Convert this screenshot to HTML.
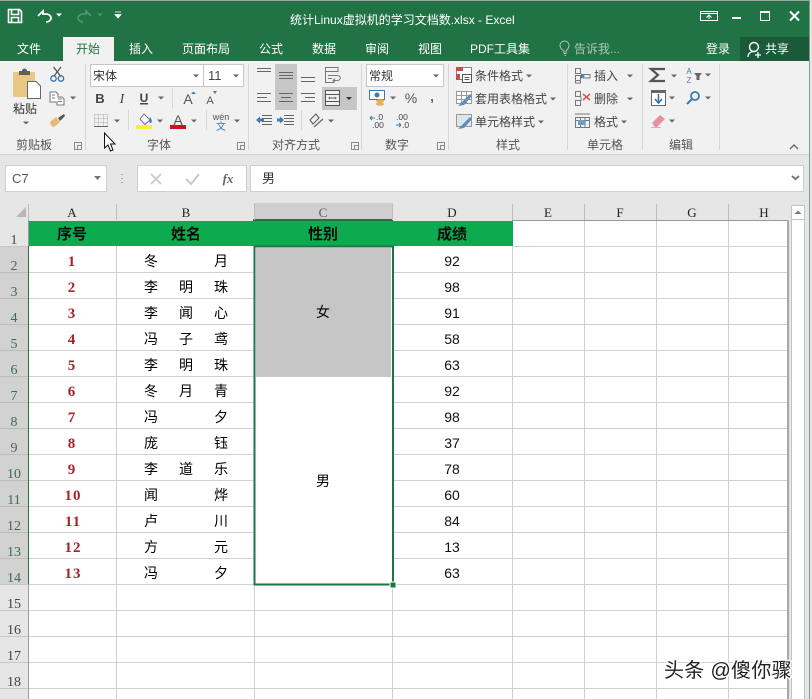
<!DOCTYPE html>
<html lang="zh"><head><meta charset="utf-8"><title>统计Linux虚拟机的学习文档数.xlsx - Excel</title>
<style>
html,body{margin:0;padding:0;background:#e6e6e6;width:812px;height:699px;overflow:hidden}
svg{display:block}
text{font-family:"Liberation Sans","Noto Sans CJK SC",sans-serif;font-size:12px;fill:#444}
.tab{fill:#fff;text-anchor:middle}
.lb{fill:#555;text-anchor:middle}
.c{font-family:"Liberation Serif","WenQuanYi Zen Hei","Noto Sans CJK SC",sans-serif;font-size:14px;fill:#000;text-anchor:middle;transform:translateY(1px)}
.h{font-family:"Liberation Serif","WenQuanYi Zen Hei","Noto Sans CJK SC",sans-serif;font-size:15px;font-weight:700;fill:#0a0a0a;text-anchor:middle}
.n{font-family:"Liberation Serif",serif;font-size:15px;font-weight:700;fill:#a5232b;text-anchor:middle;letter-spacing:1px}
.d{font-size:14px;fill:#111;text-anchor:middle;transform:translateY(1px)}
.r{font-family:"Liberation Serif",serif;font-size:14px;fill:#444;text-anchor:middle}
.rs{fill:#3f6a54}
.ch{font-family:"Liberation Serif",serif;font-size:13px;fill:#222;text-anchor:middle}
</style></head><body>
<svg width="812" height="699" viewBox="0 0 812 699" xmlns="http://www.w3.org/2000/svg">
<defs>
<path id="dd" d="M-3 -1.500H3L0 1.500Z" fill="#666"/>
<path id="dl" d="M0.500 0.500H7.500V7.500H0.500ZM3.500 3.500H7.500V7.500H3.500Z" fill="none" stroke="#8a8a8a"/>
</defs>
<rect width="812" height="699" fill="#e6e6e6"/>
<!-- title bar -->
<rect x="0" y="1" width="809" height="60" fill="#217346"/>
<rect x="809" y="0" width="1" height="699" fill="#7f9f8d"/>
<rect x="0" y="0" width="809" height="1" fill="#9aa8a0"/>
<path d="M8.500 9.500H19.500L21.500 11.500V22.500H8.500ZM11.500 9.500V14.500H18.500V9.500M11.500 22.500V17.500H18.500V22.500" fill="none" stroke="#fff" stroke-width="1.600"/>
<path d="M38 16L43 11V14H46C49 14 51 16 51 18C51 20 49 22 46 22" fill="none" stroke="#fff" stroke-width="1.800"/>
<path d="M56 13.500H62L59 16.500Z" fill="#fff"/>
<path d="M91 16L86 11V14H83C80 14 78 16 78 18C78 20 80 22 83 22" fill="none" stroke="#4f9470" stroke-width="1.800"/>
<path d="M97 13.500H103L100 16.500Z" fill="#4f9470"/>
<path d="M115 12H121M115 14.500H121L118 18Z" fill="#fff" stroke="#fff" stroke-width=".8"/>
<text x="290" y="24" style="fill:#fff">统计Linux虚拟机的学习文档数.xlsx - Excel</text>
<path d="M700.500 11.500H717.500V20.500H700.500ZM700.500 13.500H717.500M709 19V15M706.500 17.500L709 15L711.500 17.500" fill="none" stroke="#fff" stroke-width="1"/>
<rect x="732" y="17" width="9" height="2" fill="#fff"/>
<rect x="760.500" y="11.500" width="9" height="9" fill="none" stroke="#fff" stroke-width="1"/><rect x="760" y="11" width="10" height="2" fill="#fff"/>
<path d="M790 11.500L799 20.500M799 11.500L790 20.500" stroke="#fff" stroke-width="2"/>
<!-- tabs -->
<rect x="63" y="37" width="51" height="24" fill="#f1f1f1"/>
<rect x="740" y="37" width="69" height="24" fill="#1b5a38"/>
<text class="tab" x="29" y="53">文件</text>
<text class="tab" x="88" y="53" style="fill:#217346">开始</text>
<text class="tab" x="141" y="53">插入</text>
<text class="tab" x="206" y="53">页面布局</text>
<text class="tab" x="271" y="53">公式</text>
<text class="tab" x="324" y="53">数据</text>
<text class="tab" x="377" y="53">审阅</text>
<text class="tab" x="430" y="53">视图</text>
<text class="tab" x="500" y="53">PDF工具集</text>
<path d="M564 53.500V51C561 49 560 47 560 45.500A4.500 4.500 0 0 1 569 45.500C569 47 568 49 566 51V53.500ZM564.500 55.500H566" fill="none" stroke="#a9c9b6" stroke-width="1"/>
<text class="tab" x="597" y="53" style="fill:#a9c9b6">告诉我...</text>
<text class="tab" x="718" y="53">登录</text>
<circle cx="754" cy="47" r="4.500" fill="none" stroke="#fff" stroke-width="1.400"/>
<path d="M748 57C748 53 751 51.500 754 51.500M755 55H761M758 52V58" fill="none" stroke="#fff" stroke-width="1.300"/>
<text class="tab" x="777" y="53">共享</text>
<!-- ribbon -->
<rect x="0" y="61" width="809" height="93" fill="#f1f1f1"/>
<rect x="0" y="154" width="809" height="1" fill="#d4d4d4"/>
<path d="M85.500 64V150M248.500 64V150M361.500 64V150M448.500 64V150M567.500 64V150M642.500 64V150M719.500 64V150M172.500 88V108M128.500 110V130M206.500 110V130M301.500 110V130" stroke="#d6d6d6"/>
<!-- clipboard -->
<rect x="13" y="72" width="22" height="25" rx="1" fill="#eac784"/>
<path d="M19 75V71H22A2.500 2.500 0 0 1 27 71H30V75Z" fill="#5f5f5f"/>
<path d="M27.500 81.500H36L40.500 86V98.500H27.500Z" fill="#fff" stroke="#666"/>
<text x="25" y="113" style="fill:#333;text-anchor:middle">粘贴</text>
<use href="#dd" x="26" y="123"/>
<circle cx="53.500" cy="78.500" r="2.700" fill="none" stroke="#2f73ad" stroke-width="1.300"/><circle cx="61" cy="78.500" r="2.700" fill="none" stroke="#2f73ad" stroke-width="1.300"/>
<path d="M54 76L61 67M60.500 76L53.500 67" stroke="#555" stroke-width="1.300"/>
<path d="M50 92H56L58 94V97H62L64 99V105H57V102H50Z" fill="#fff" stroke="#777"/>
<path d="M58 99H62M58 101.500H62M52 95H55M52 98H55" stroke="#777"/>
<use href="#dd" x="73" y="98"/>
<path d="M50 122L56 117L60 122L54 127C52 127 50 124 50 122Z" fill="#e3bc76"/>
<path d="M58 118L64 114L65 116L60 121Z" fill="#555"/>
<text class="lb" x="34" y="149">剪贴板</text>
<use href="#dl" x="74" y="142"/>
<!-- font -->
<rect x="90.500" y="64.500" width="113" height="22" fill="#fff" stroke="#c6c6c6"/>
<rect x="203.500" y="64.500" width="40" height="22" fill="#fff" stroke="#c6c6c6"/>
<text x="93" y="80" style="fill:#333">宋体</text>
<use href="#dd" x="196" y="76"/>
<text x="208" y="80" style="fill:#444;font-size:13px">11</text>
<use href="#dd" x="236" y="76"/>
<text x="100" y="103" style="font-weight:700;font-size:13px;fill:#444;text-anchor:middle">B</text>
<text x="122" y="103" style="font-family:'Liberation Serif',serif;font-style:italic;font-size:14px;fill:#444;text-anchor:middle">I</text>
<text x="144" y="102" style="font-weight:700;font-size:12px;fill:#444;text-anchor:middle">U</text><rect x="140" y="103" width="8" height="1.500" fill="#444"/>
<use href="#dd" x="161" y="98"/>
<text x="188" y="104" style="font-size:14px;fill:#555;text-anchor:middle">A</text><path d="M191 94H196L193.500 91.500Z" fill="#3f79ad"/>
<text x="210" y="104" style="font-size:11px;fill:#555;text-anchor:middle">A</text><path d="M213 91H217L215 94Z" fill="#3f79ad"/>
<path d="M94.500 114.500H107.500V127M94.500 114.500V127M94.500 118.500H107.500M94.500 122.500H107.500M98.500 114.500V127M103.500 114.500V127" fill="none" stroke="#aaa" stroke-dasharray="1 1"/>
<rect x="94" y="126" width="14" height="1" fill="#666"/>
<use href="#dd" x="117" y="121"/>
<path d="M140 119L144 114L150 120L145 124.500Z" fill="#fff" stroke="#777"/><path d="M150 117C152.500 120 152 123 150.500 123C149 123 149 120 150 117Z" fill="#3f79ad"/>
<rect x="136" y="125" width="16" height="4" fill="#f7f03a"/>
<use href="#dd" x="160" y="121"/>
<text x="178" y="125" style="font-size:14px;fill:#555;text-anchor:middle">A</text>
<rect x="170" y="125" width="16" height="4" fill="#c8161d"/>
<use href="#dd" x="194" y="121"/>
<text x="221" y="120" style="font-size:9px;fill:#555;text-anchor:middle">wén</text>
<text x="221" y="130" style="font-size:10px;fill:#3f79ad;text-anchor:middle">文</text>
<use href="#dd" x="237" y="121"/>
<text class="lb" x="159" y="149">字体</text>
<use href="#dl" x="237" y="142"/>
<!-- alignment -->
<rect x="275" y="64" width="22" height="46" fill="#c6c6c6"/>
<rect x="322" y="87" width="35" height="23" fill="#c6c6c6"/>
<path d="M257 68.500H271M257 71.500H271M279 72.500H293M279 75.500H293M279 78.500H293M301 77.500H315M301 81.500H315" stroke="#666"/>
<path d="M325.500 67.500H338V71.500H325.500ZM325.500 71.500V82.500H334M328 75.500H337C341.500 75.500 341.500 80.500 337 80.500H333M335 78.500L333 80.500L335 82.500M328 78.500H332" fill="none" stroke="#777"/>
<path d="M257 93.500H271M257 97.500H267M257 101.500H271M279 93.500H293M281 97.500H291M279 101.500H293M301 93.500H315M305 97.500H315M301 101.500H315" stroke="#666"/>
<path d="M325.500 90.500H339.500V105.500H325.500ZM325.500 94.500H339.500M325.500 101.500H339.500M329.500 98H336" fill="#f1f1f1" stroke="#555"/>
<path d="M328 98L330 96.500V99.500ZM337 98L335 96.500V99.500Z" fill="#3f79ad"/>
<path d="M346 97H352L349 100Z" fill="#333"/>
<path d="M262 115.500H272M262 118.500H272M262 121.500H272M262 124.500H272" stroke="#666"/><path d="M256 120L260 116.500V118.500H264V121.500H260V123.500Z" fill="#3f79ad"/>
<path d="M284 115.500H294M284 118.500H294M284 121.500H294M284 124.500H294" stroke="#666"/><path d="M284 120L280 116.500V118.500H277V121.500H280V123.500Z" fill="#3f79ad"/>
<path d="M310 120L316 114L319 118L313 124ZM314 127L323 119" fill="none" stroke="#666" stroke-width="1.200"/>
<use href="#dd" x="331" y="121"/>
<text class="lb" x="296" y="149">对齐方式</text>
<use href="#dl" x="351" y="142"/>
<!-- number -->
<rect x="366.500" y="64.500" width="77" height="22" fill="#fff" stroke="#c6c6c6"/>
<text x="369" y="80" style="fill:#333">常规</text>
<use href="#dd" x="436" y="76"/>
<rect x="369.500" y="90.500" width="15" height="9" fill="#fff" stroke="#3f79ad"/>
<circle cx="377" cy="95" r="2.500" fill="#3f79ad"/><ellipse cx="380" cy="101" rx="4" ry="1.800" fill="#e0b35f"/><ellipse cx="380" cy="104" rx="4" ry="1.800" fill="#e0b35f"/>
<use href="#dd" x="393" y="98"/>
<text x="411" y="103" style="font-size:14px;fill:#555;text-anchor:middle">%</text>
<text x="432" y="101" style="font-weight:700;font-size:13px;fill:#555;text-anchor:middle">,</text>
<text x="376" y="120" style="font-size:8.500px;fill:#444">.0</text>
<text x="372" y="128" style="font-size:8.500px;fill:#444">.00</text>
<path d="M370 118H375M370 118L372 116M370 118L372 120" stroke="#3f79ad" fill="none"/>
<text x="396" y="120" style="font-size:8.500px;fill:#444">.00</text>
<text x="402" y="128" style="font-size:8.500px;fill:#444">.0</text>
<path d="M401 125H396M401 125L399 123M401 125L399 127" stroke="#3f79ad" fill="none"/>
<text class="lb" x="397" y="149">数字</text>
<use href="#dl" x="437" y="142"/>
<!-- styles -->
<path d="M456.500 67.500H471.500V79.500H456.500Z" fill="#fff" stroke="#888"/><rect x="456" y="67" width="7" height="4" fill="#c0504d"/><rect x="456" y="74" width="4" height="6" fill="#c0504d"/>
<rect x="462.500" y="74.500" width="9" height="8" fill="#fff" stroke="#555"/><path d="M464.500 77.500H469.500M464.500 79.500H469.500" stroke="#555"/>
<text x="475" y="80">条件格式</text><use href="#dd" x="529" y="76"/>
<path d="M456.500 91.500H471.500V103.500H456.500ZM456.500 95.500H471.500M456.500 99.500H471.500M461.500 91.500V103.500M466.500 91.500V103.500" fill="#fff" stroke="#999"/>
<path d="M461 103L470 94L472 96L464 105L458 106Z" fill="#5c8fba"/>
<text x="475" y="103">套用表格格式</text><use href="#dd" x="553" y="99"/>
<path d="M456.500 114.500H471.500V126.500H456.500Z" fill="#dfe5ea" stroke="#999"/>
<path d="M461 126L470 117L472 119L464 128L458 129Z" fill="#5c8fba"/>
<text x="475" y="126">单元格样式</text><use href="#dd" x="541" y="122"/>
<text class="lb" x="508" y="149">样式</text>
<!-- cells -->
<path d="M575.500 68.500H580.500V73.500H575.500ZM575.500 75.500H580.500V80.500H575.500ZM583 74.500H590V78H583ZM575.500 80.500V83H580.500V80.500" fill="none" stroke="#777"/>
<path d="M585 76L581 73.500V78.500Z" fill="#3f79ad"/>
<text x="594" y="80">插入</text><use href="#dd" x="630" y="76"/>
<path d="M575.500 91.500H580.500V96.500H575.500ZM575.500 100.500H580.500V105.500H575.500ZM581 96.500V100.500H575.500" fill="none" stroke="#777"/>
<path d="M583 94L590 100M590 94L583 100" stroke="#d9534f" stroke-width="1.500"/>
<text x="594" y="103">删除</text><use href="#dd" x="630" y="99"/>
<path d="M575.500 117.500H589.500V127.500H575.500ZM575.500 120.500H589.500M580.500 117.500V127.500M585 117.500V127.500M575 114H590" fill="none" stroke="#777"/>
<rect x="578" y="120" width="7" height="5" fill="#6d9cc4"/>
<text x="594" y="126">格式</text><use href="#dd" x="624" y="122"/>
<text class="lb" x="605" y="149">单元格</text>
<!-- editing -->
<path d="M665 69H651L658 75L651 81H665" fill="none" stroke="#555" stroke-width="2.200"/>
<use href="#dd" x="674" y="76"/>
<text x="689" y="74" style="font-size:8px;fill:#3f79ad;text-anchor:middle">A</text><text x="689" y="83" style="font-size:8px;fill:#8e5fae;text-anchor:middle">Z</text>
<path d="M694 73H702L699.500 76V80H696.500V76Z" fill="#666"/><use href="#dd" x="708" y="75"/>
<rect x="651.500" y="90.500" width="14" height="15" fill="#fff" stroke="#666"/><rect x="651" y="90" width="15" height="3" fill="#666"/>
<path d="M658.500 94V102M655 99L658.500 103L662 99" fill="none" stroke="#2f73ad" stroke-width="1.600"/>
<use href="#dd" x="672" y="98"/>
<circle cx="695" cy="96" r="4" fill="none" stroke="#3f79ad" stroke-width="1.800"/><path d="M692 99L687 104" stroke="#3f79ad" stroke-width="2"/>
<use href="#dd" x="708" y="98"/>
<path d="M652 123L660 115L665 119L657 127H655Z" fill="#eb8f9e"/><rect x="651" y="127" width="10" height="1" fill="#bbb"/>
<use href="#dd" x="672" y="121"/>
<text class="lb" x="681" y="149">编辑</text>
<path d="M790 149L794 145L798 149" fill="none" stroke="#666" stroke-width="1.400"/>
<!-- cursor -->
<path d="M104.500 133V148L108 145L110.500 151L113 150L110.500 144H115Z" fill="#fff" stroke="#111"/>
<!-- formula bar -->
<rect x="5.500" y="165.500" width="101" height="26" fill="#fff" stroke="#cfcfcf"/>
<text x="12" y="183" style="font-size:13px;fill:#555">C7</text>
<path d="M94 176H101L97.500 180Z" fill="#777"/>
<path d="M122 174V175M122 178V179M122 182V183" stroke="#aaa" stroke-width="2"/>
<rect x="137.500" y="165.500" width="109" height="26" fill="#fff" stroke="#cfcfcf"/>
<rect x="250.500" y="165.500" width="553" height="26" fill="#fff" stroke="#cfcfcf"/>
<path d="M151 174L161 184M161 174L151 184" stroke="#c9c9c9" stroke-width="1.800"/>
<path d="M186 179L191 184L199 174" fill="none" stroke="#c9c9c9" stroke-width="2"/>
<text x="228" y="183" style="font-family:'Liberation Serif',serif;font-style:italic;font-weight:700;font-size:13px;fill:#666;text-anchor:middle">fx</text>
<text x="262" y="183" style="font-size:13px;fill:#333">男</text>
<path d="M792 176L795.500 179L799 176" fill="none" stroke="#777" stroke-width="2"/>
<!-- sheet -->
<rect x="29" y="221" width="758" height="478" fill="#fff"/>
<rect x="254" y="203" width="139" height="17" fill="#cfcfcf"/>
<rect x="253" y="219" width="140" height="2" fill="#217346"/>
<rect x="0" y="246" width="28" height="338" fill="#d2d2d2"/>
<path d="M16 217H26V207Z" fill="#b8b8b8"/>
<path d="M28.500 204V220M116.500 204V220M254.500 204V220M392.500 204V220M512.500 204V220M584.500 204V220M656.500 204V220M728.500 204V220" stroke="#bdbdbd"/>
<path d="M512 220.500H787.500V699M28.500 220V699" fill="none" stroke="#9a9a9a"/>
<path d="M788 220V699" stroke="#a8a8a8" stroke-width="2"/>
<path d="M29 272.500H787M29 298.500H787M29 324.500H787M29 350.500H787M29 376.500H787M29 402.500H787M29 428.500H787M29 454.500H787M29 480.500H787M29 506.500H787M29 532.500H787M29 558.500H787M29 584.500H787M29 610.500H787M29 636.500H787M29 662.500H787M29 688.500H787M513 246.500H787M116.500 221V699M254.500 221V699M392.500 221V699M512.500 221V699M584.500 221V699M656.500 221V699M728.500 221V699" stroke="#d0d0d0"/>
<path d="M0 272.500H28M0 298.500H28M0 324.500H28M0 350.500H28M0 376.500H28M0 402.500H28M0 428.500H28M0 454.500H28M0 480.500H28M0 506.500H28M0 532.500H28M0 558.500H28" stroke="#bcbcbc"/>
<path d="M0 246.500H28M0 584.500H28M0 610.500H28M0 636.500H28M0 662.500H28M0 688.500H28" stroke="#c6c6c6"/>
<rect x="29" y="221" width="484" height="25" fill="#0cab50"/>
<rect x="28" y="246" width="1" height="338" fill="#217346"/>
<rect x="255" y="247" width="137" height="337" fill="#fff"/>
<rect x="256" y="248" width="135" height="129" fill="#c6c6c6"/>
<rect x="254.500" y="246.500" width="138.500" height="338" fill="none" stroke="#217346" stroke-width="2"/>
<rect x="390" y="582" width="6" height="6" fill="#217346" stroke="#fff"/>
<!-- col headers -->
<text class="ch" x="72" y="217">A</text><text class="ch" x="186" y="217">B</text><text class="ch" x="323" y="217" style="fill:#555">C</text><text class="ch" x="452" y="217">D</text><text class="ch" x="548" y="217">E</text><text class="ch" x="620" y="217">F</text><text class="ch" x="692" y="217">G</text><text class="ch" x="764" y="217">H</text>
<!-- row headers -->
<text class="r" x="14" y="244">1</text><text class="r rs" x="14" y="270">2</text><text class="r rs" x="14" y="296">3</text><text class="r rs" x="14" y="322">4</text><text class="r rs" x="14" y="348">5</text><text class="r rs" x="14" y="374">6</text><text class="r rs" x="14" y="400">7</text><text class="r rs" x="14" y="426">8</text><text class="r rs" x="14" y="452">9</text><text class="r rs" x="14" y="478">10</text><text class="r rs" x="14" y="504">11</text><text class="r rs" x="14" y="530">12</text><text class="r rs" x="14" y="556">13</text><text class="r rs" x="14" y="582">14</text><text class="r" x="14" y="608">15</text><text class="r" x="14" y="634">16</text><text class="r" x="14" y="660">17</text><text class="r" x="14" y="686">18</text>
<!-- header row -->
<text class="h" x="72" y="239">序号</text><text class="h" x="186" y="239">姓名</text><text class="h" x="323" y="239">性别</text><text class="h" x="452" y="239">成绩</text>
<!-- A -->
<text class="n" x="72" y="266">1</text><text class="n" x="72" y="292">2</text><text class="n" x="72" y="318">3</text><text class="n" x="72" y="344">4</text><text class="n" x="72" y="370">5</text><text class="n" x="72" y="396">6</text><text class="n" x="72" y="422">7</text><text class="n" x="72" y="448">8</text><text class="n" x="72" y="474">9</text><text class="n" x="73" y="500">10</text><text class="n" x="73" y="526">11</text><text class="n" x="73" y="552">12</text><text class="n" x="73" y="578">13</text>
<!-- B -->
<text class="c" x="151" y="265">冬</text><text class="c" x="221" y="265">月</text>
<text class="c" x="151" y="291">李</text><text class="c" x="186" y="291">明</text><text class="c" x="221" y="291">珠</text>
<text class="c" x="151" y="317">李</text><text class="c" x="186" y="317">闻</text><text class="c" x="221" y="317">心</text>
<text class="c" x="151" y="343">冯</text><text class="c" x="186" y="343">子</text><text class="c" x="221" y="343">鸢</text>
<text class="c" x="151" y="369">李</text><text class="c" x="186" y="369">明</text><text class="c" x="221" y="369">珠</text>
<text class="c" x="151" y="395">冬</text><text class="c" x="186" y="395">月</text><text class="c" x="221" y="395">青</text>
<text class="c" x="151" y="421">冯</text><text class="c" x="221" y="421">夕</text>
<text class="c" x="151" y="447">庞</text><text class="c" x="221" y="447">钰</text>
<text class="c" x="151" y="473">李</text><text class="c" x="186" y="473">道</text><text class="c" x="221" y="473">乐</text>
<text class="c" x="151" y="499">闻</text><text class="c" x="221" y="499">烨</text>
<text class="c" x="151" y="525">卢</text><text class="c" x="221" y="525">川</text>
<text class="c" x="151" y="551">方</text><text class="c" x="221" y="551">元</text>
<text class="c" x="151" y="577">冯</text><text class="c" x="221" y="577">夕</text>
<!-- C -->
<text class="c" x="323" y="316">女</text><text class="c" x="323" y="485">男</text>
<!-- D -->
<text class="d" x="452" y="265">92</text><text class="d" x="452" y="291">98</text><text class="d" x="452" y="317">91</text><text class="d" x="452" y="343">58</text><text class="d" x="452" y="369">63</text><text class="d" x="452" y="395">92</text><text class="d" x="452" y="421">98</text><text class="d" x="452" y="447">37</text><text class="d" x="452" y="473">78</text><text class="d" x="452" y="499">60</text><text class="d" x="452" y="525">84</text><text class="d" x="452" y="551">13</text><text class="d" x="452" y="577">63</text>
<!-- scrollbar -->
<rect x="791.500" y="205.500" width="13" height="494" fill="#fff" stroke="#c4c4c4"/>
<path d="M792 219.500H804" stroke="#c4c4c4"/>
<path d="M794.500 214L798 210.500L801.500 214Z" fill="#777"/>
<!-- watermark -->
<text x="664" y="677" style="font-size:20px;letter-spacing:.3px;fill:#222;stroke:#fff;stroke-width:3px;paint-order:stroke;stroke-linejoin:round">头条 @傻你骤</text>
</svg>
</body></html>
